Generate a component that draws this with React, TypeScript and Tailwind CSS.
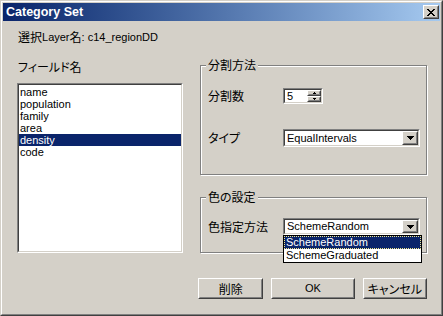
import React from "react";

const FONT = "[font-family:'Liberation_Sans','Noto_Sans_CJK_JP',sans-serif]";
const JP = "[font-family:'Noto_Sans_CJK_JP',sans-serif] [font-feature-settings:'palt'] text-[12px]";

function Sunken({ className = "", inner = "", children }: { className?: string; inner?: string; children?: React.ReactNode }) {
  return (
    <div className={"border border-t-[#808080] border-l-[#808080] border-b-white border-r-white " + className}>
      <div className={"h-full w-full border border-t-[#404040] border-l-[#404040] border-b-[#d4d0c8] border-r-[#d4d0c8] bg-white " + inner}>
        {children}
      </div>
    </div>
  );
}

function Raised({ className = "", inner = "", children }: { className?: string; inner?: string; children?: React.ReactNode }) {
  return (
    <div className={"border border-t-white border-l-white border-b-[#404040] border-r-[#404040] " + className}>
      <div className={"h-full w-full border border-t-[#d4d0c8] border-l-[#d4d0c8] border-b-[#808080] border-r-[#808080] bg-[#d4d0c8] flex items-center justify-center " + inner}>
        {children}
      </div>
    </div>
  );
}

function DownArrow() {
  return (
    <svg width="7" height="4" viewBox="0 0 7 4" shapeRendering="crispEdges">
      <path d="M0 0H7V1H0ZM1 1H6V2H1ZM2 2H5V3H2ZM3 3H4V4H3Z" fill="#000" />
    </svg>
  );
}

function Combo({ text, className = "" }: { text: string; className?: string }) {
  return (
    <Sunken className={className} inner="flex items-stretch">
      <div className={"flex-1 flex items-center pl-[2px] text-[11px] text-black " + FONT}>{text}</div>
      <Raised className="w-[16px]">
        <DownArrow />
      </Raised>
    </Sunken>
  );
}

function Group({ title, className = "", children }: { title: string; className?: string; children?: React.ReactNode }) {
  return (
    <div className={"relative border border-[#808080] shadow-[inset_1px_1px_0_#fff,1px_1px_0_#fff] " + className}>
      <div className={"absolute -top-[8px] left-[5px] px-[2px] bg-[#d4d0c8] leading-[14px] text-black " + JP}>{title}</div>
      {children}
    </div>
  );
}

export default function App() {
  const items = ["name", "population", "family", "area", "density", "code"];
  return (
    <div className={"w-[443px] h-[316px] bg-[#d4d0c8] border border-t-[#d4d0c8] border-l-[#d4d0c8] border-b-[#404040] border-r-[#404040] " + FONT}>
      <div className="h-full w-full border border-t-white border-l-white border-b-[#808080] border-r-[#808080] p-px flex flex-col">
        {/* title bar */}
        <div className="h-[18px] flex items-center justify-between pl-[3px] pr-[1px] bg-gradient-to-r from-[#0a246a] to-[#a6caf0]">
          <span className="text-white font-bold text-[12.5px] leading-none">Category Set</span>
          <Raised className="w-[16px] h-[14px]">
            <svg width="8" height="7" viewBox="0 0 8 7" shapeRendering="crispEdges">
              <path d="M0 0H2V1H0ZM6 0H8V1H6ZM1 1H3V2H1ZM5 1H7V2H5ZM2 2H6V3H2ZM3 3H5V4H3ZM2 4H6V5H2ZM1 5H3V6H1ZM5 5H7V6H5ZM0 6H2V7H0ZM6 6H8V7H6Z" fill="#000" />
            </svg>
          </Raised>
        </div>

        {/* body */}
        <div className="flex-1 flex flex-col pl-[14px]">
          <div className="mt-[9px] h-[14px] flex items-center ml-[1px] text-black">
            <span className={JP}>選択</span>
            <span className="text-[11px]">Layer</span>
            <span className={JP}>名</span>
            <span className="text-[11px] whitespace-pre">: c14_regionDD</span>
          </div>

          <div className="mt-[15px] flex">
            {/* left column */}
            <div className="w-[166px] flex flex-col">
              <div className={"mt-px h-[14px] leading-[14px] ml-[1px] text-black " + JP}>フィールド名</div>
              <Sunken className="mt-[9px] h-[170px]" inner="pt-px">
                {items.map((it) => (
                  <div
                    key={it}
                    className={
                      "h-[12px] leading-[12px] pl-px text-[11px] " +
                      (it === "density" ? "bg-[#0a246a] text-white" : "text-black")
                    }
                  >
                    {it}
                  </div>
                ))}
              </Sunken>
            </div>

            {/* right column */}
            <div className="ml-[15px] w-[229px] flex flex-col">
              <Group title="分割方法" className="ml-[2px] mt-[6px] w-[227px] h-[110px]">
                <div className="flex flex-col pl-[7px]">
                  <div className="mt-[22px] h-[16px] flex items-center">
                    <div className={"w-[75px] text-black leading-[14px] " + JP}>分割数</div>
                    <Sunken className="w-[40px] h-[16px]" inner="flex items-stretch">
                      <div className="flex-1 flex items-center pl-[2px] text-[11px] text-black">5</div>
                      <div className="w-[14px] flex flex-col">
                        <Raised className="flex-1">
                          <svg width="3" height="2" viewBox="0 0 3 2" shapeRendering="crispEdges">
                            <path d="M1 0H2V1H1ZM0 1H3V2H0Z" fill="#000" />
                          </svg>
                        </Raised>
                        <Raised className="flex-1">
                          <svg width="3" height="2" viewBox="0 0 3 2" shapeRendering="crispEdges">
                            <path d="M0 0H3V1H0ZM1 1H2V2H1Z" fill="#000" />
                          </svg>
                        </Raised>
                      </div>
                    </Sunken>
                  </div>
                  <div className="mt-[25px] h-[18px] flex items-center">
                    <div className={"w-[75px] text-black leading-[14px] " + JP}>タイプ</div>
                    <Combo text="EqualIntervals" className="w-[137px] h-[18px]" />
                  </div>
                </div>
              </Group>

              <Group title="色の設定" className="ml-[2px] mt-[22px] w-[227px] h-[56px]">
                <div className="flex flex-col pl-[7px]">
                  <div className="mt-[20px] h-[17px] flex items-center">
                    <div className={"w-[75px] text-black leading-[14px] " + JP}>色指定方法</div>
                    <div className="relative">
                      <Combo text="SchemeRandom" className="w-[137px] h-[17px]" />
                      <div className="absolute left-0 top-full w-[139px] border border-black bg-white z-10">
                        <div className="h-[13px] bg-[#0a246a] text-white text-[11px] leading-[11px] pl-px border border-dotted border-[#f0e68c]">
                          SchemeRandom
                        </div>
                        <div className="h-[13px] text-black text-[11px] leading-[13px] pl-[2px]">SchemeGraduated</div>
                      </div>
                    </div>
                  </div>
                </div>
              </Group>

              <div className="mt-[25px] h-[21px] flex">
                <Raised className="w-[66px] h-[21px]" inner={"text-black " + JP}>削除</Raised>
                <Raised className="ml-[8px] w-[84px] h-[21px]" inner="text-black text-[11px]">OK</Raised>
                <Raised className="ml-[8px] w-[65px] h-[21px]" inner={"text-black " + JP}>キャンセル</Raised>
              </div>
            </div>
          </div>
        </div>
      </div>
    </div>
  );
}
